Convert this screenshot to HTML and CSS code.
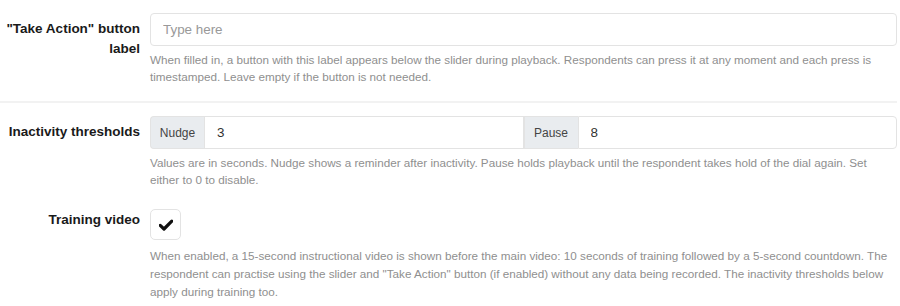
FILE: index.html
```html
<!DOCTYPE html>
<html lang="en">
<head>
    <meta charset="UTF-8">
    <meta name="viewport" content="width=device-width, initial-scale=1.0">
    <title>Playback settings</title>
    <link rel="stylesheet" href="styles.css">
</head>
<body>

<div class="settings">

    <div class="form-row divided">
        <label class="row-label" for="action_label">"Take Action" button label</label>
        <div class="row-control">
            <input type="text" class="text-input" id="action_label" placeholder="Type here">
            <p class="help">When filled in, a button with this label appears below the slider during playback. Respondents can press it at any moment and each press is timestamped. Leave empty if the button is not needed.</p>
        </div>
    </div>

    <div class="form-row">
        <label class="row-label" for="nudge">Inactivity thresholds</label>
        <div class="row-control">
            <div class="input-group">
                <span class="addon">Nudge</span>
                <input type="text" class="text-input" id="nudge" value="3">
                <span class="addon">Pause</span>
                <input type="text" class="text-input" id="pause" value="8">
            </div>
            <p class="help">Values are in seconds. Nudge shows a reminder after inactivity. Pause holds playback until the respondent takes hold of the dial again. Set either to 0 to disable.</p>
        </div>
    </div>

    <div class="form-row check-row">
        <label class="row-label" for="training">Training video</label>
        <div class="row-control">
            <button class="check-box" id="training" type="button" aria-pressed="true">
                <svg width="14" height="12" viewBox="0 0 14 12"><path d="M1.2 6.4 L5 10 L12.8 2.2" fill="none" stroke="#111" stroke-width="3.2" stroke-linecap="round" stroke-linejoin="round"/></svg>
            </button>
            <p class="help">When enabled, a 15-second instructional video is shown before the main video: 10 seconds of training followed by a 5-second countdown. The respondent can practise using the slider and "Take Action" button (if enabled) without any data being recorded. The inactivity thresholds below apply during training too.</p>
        </div>
    </div>

</div>

</body>
</html>
```

FILE: styles.css
```css
body {
    font-family: "Liberation Sans", Arial, sans-serif;
    margin: 0;
    color: #1a1a1a;
}
.settings {
    padding: 0 3px 0 0;
}
.form-row {
    display: grid;
    grid-template-columns: 140px 1fr;
    column-gap: 10px;
    padding-top: 13px;
}
.form-row.divided {
    padding-bottom: 16px;
    border-bottom: 2px solid #f2f2f2;
}
.form-row.check-row {
    padding-top: 21px;
}
.row-label {
    font-size: 13.5px;
    font-weight: bold;
    line-height: 20px;
    text-align: right;
    padding-top: 6px;
}
.check-row .row-label {
    padding-top: 1px;
}
.row-control {
    min-width: 0;
}
.text-input {
    display: block;
    width: 100%;
    height: 33px;
    padding: 0 12px;
    box-sizing: border-box;
    border: 1px solid #e3e3e3;
    border-radius: 4px;
    font-family: inherit;
    font-size: 13.4px;
    color: #333;
    background: #fff;
}
.text-input::placeholder {
    color: #999;
}
.input-group {
    display: flex;
}
.input-group .text-input {
    flex: 1;
    border-radius: 0;
    min-width: 0;
}
.input-group .text-input:last-child {
    border-radius: 0 4px 4px 0;
}
.addon {
    display: flex;
    align-items: center;
    width: 54px;
    justify-content: center;
    box-sizing: border-box;
    background: #e9ecef;
    border: 1px solid #e3e3e3;
    border-right: none;
    font-size: 12px;
    color: #444;
}
.addon:first-child {
    border-radius: 4px 0 0 4px;
}
.help {
    margin: 5px 0 0;
    font-size: 11.7px;
    line-height: 17px;
    color: #8f8f8f;
}
.check-box {
    display: flex;
    align-items: center;
    justify-content: center;
    width: 31px;
    height: 31px;
    padding: 0;
    border: 1px solid #e3e3e3;
    border-radius: 5px;
    background: #fff;
    cursor: pointer;
}
.check-row .help {
    margin-top: 7px;
    line-height: 18px;
}
```
